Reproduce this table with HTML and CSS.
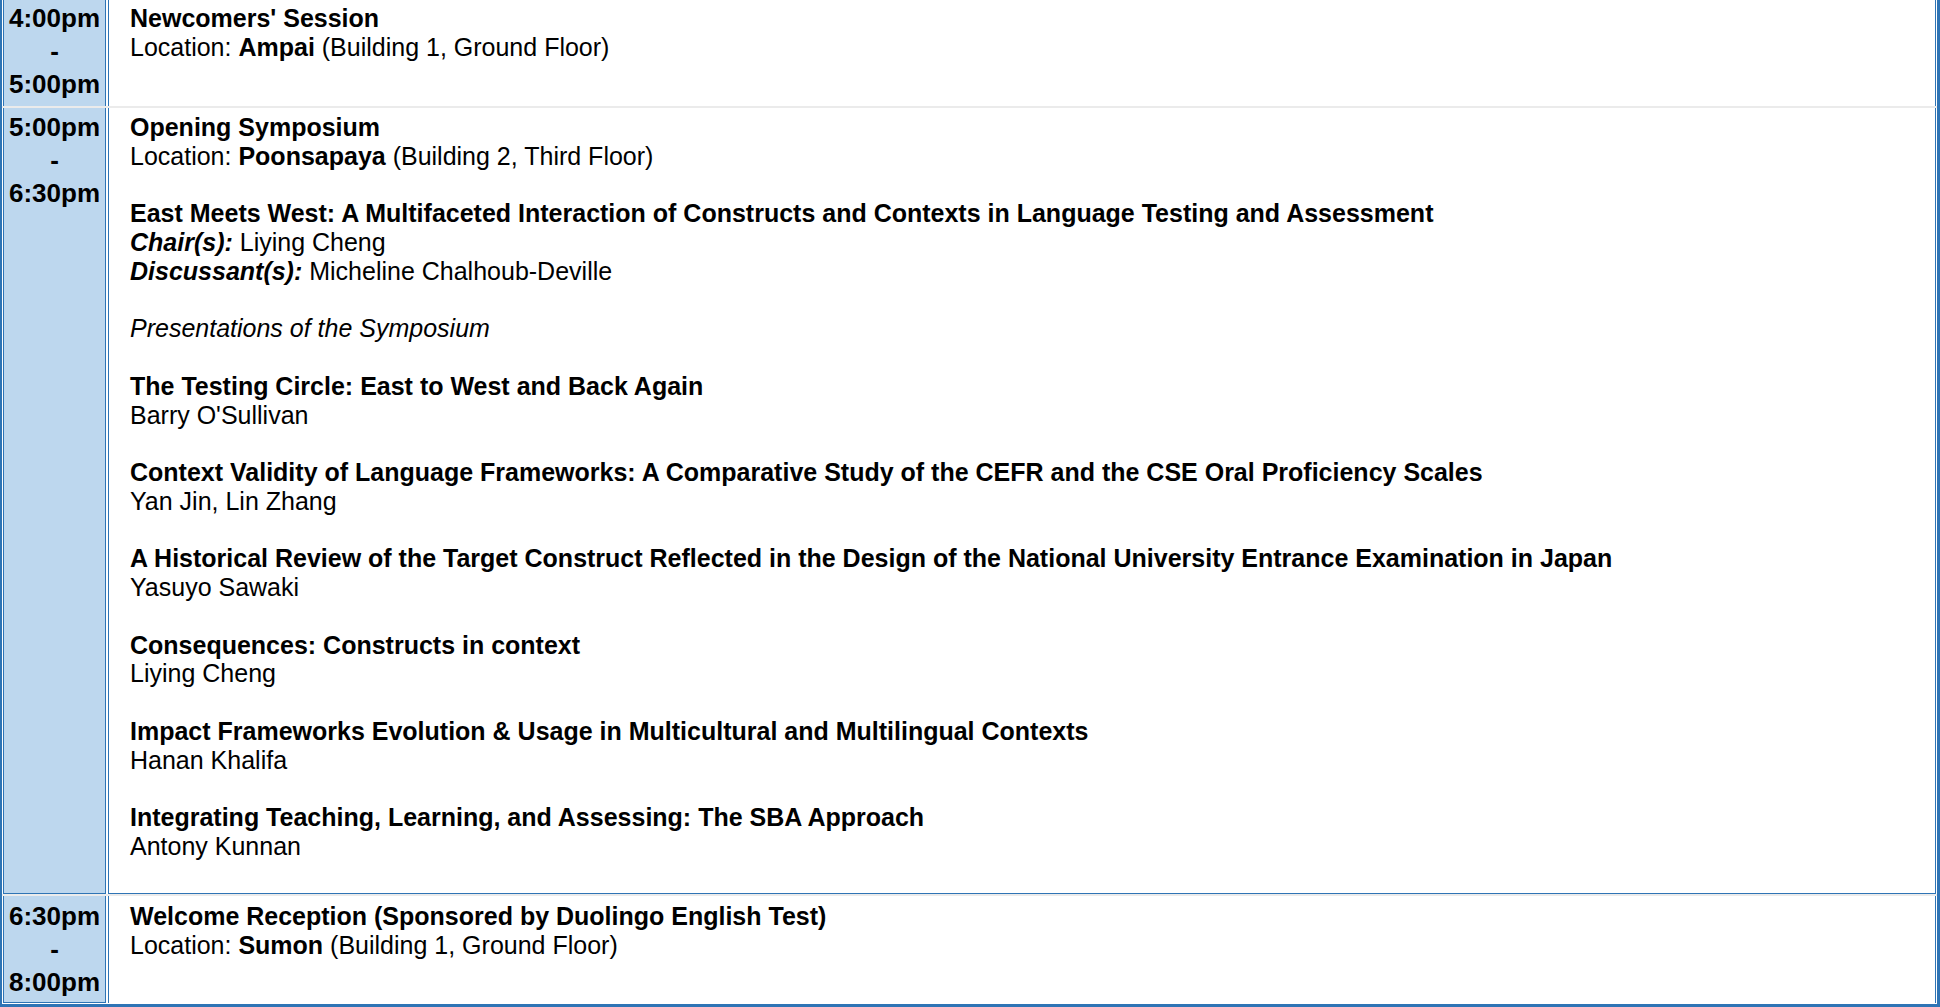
FILE: index.html
```html
<!DOCTYPE html>
<html>
<head>
<meta charset="utf-8">
<link rel="stylesheet" href="styles.css">
</head>
<body>
<div class="schedule">
  <div class="row">
    <div class="time">4:00pm<br>-<br>5:00pm</div>
    <div class="event">
      <div class="title">Newcomers' Session</div>
      <div>Location: <b>Ampai</b> (Building 1, Ground Floor)</div>
    </div>
  </div>
  <div class="row long">
    <div class="time">5:00pm<br>-<br>6:30pm</div>
    <div class="event">
      <div class="block">
        <div class="title">Opening Symposium</div>
        <div>Location: <b>Poonsapaya</b> (Building 2, Third Floor)</div>
      </div>
      <div class="block">
        <div class="title">East Meets West: A Multifaceted Interaction of Constructs and Contexts in Language Testing and Assessment</div>
        <div><b><i>Chair(s):</i></b> Liying Cheng</div>
        <div><b><i>Discussant(s):</i></b> Micheline Chalhoub-Deville</div>
      </div>
      <div class="block"><i>Presentations of the Symposium</i></div>
      <div class="block">
        <div class="title">The Testing Circle: East to West and Back Again</div>
        <div>Barry O'Sullivan</div>
      </div>
      <div class="block">
        <div class="title">Context Validity of Language Frameworks: A Comparative Study of the CEFR and the CSE Oral Proficiency Scales</div>
        <div>Yan Jin, Lin Zhang</div>
      </div>
      <div class="block">
        <div class="title">A Historical Review of the Target Construct Reflected in the Design of the National University Entrance Examination in Japan</div>
        <div>Yasuyo Sawaki</div>
      </div>
      <div class="block">
        <div class="title">Consequences: Constructs in context</div>
        <div>Liying Cheng</div>
      </div>
      <div class="block">
        <div class="title">Impact Frameworks Evolution &amp; Usage in Multicultural and Multilingual Contexts</div>
        <div>Hanan Khalifa</div>
      </div>
      <div class="block">
        <div class="title">Integrating Teaching, Learning, and Assessing: The SBA Approach</div>
        <div>Antony Kunnan</div>
      </div>
    </div>
  </div>
  <div class="row last">
    <div class="time">6:30pm<br>-<br>8:00pm</div>
    <div class="event">
      <div class="title">Welcome Reception (Sponsored by Duolingo English Test)</div>
      <div>Location: <b>Sumon</b> (Building 1, Ground Floor)</div>
    </div>
  </div>
</div>
</body>
</html>
```
FILE: styles.css
```css
html, body {
  margin: 0;
  padding: 0;
  background: #ffffff;
}

body {
  font-family: "Liberation Sans", Arial, sans-serif;
  color: #000000;
  overflow: hidden;
}

.schedule {
  margin-top: -1px;
  width: 1940px;
  box-sizing: border-box;
  border-left: 2px solid #2e74b5;
  border-right: 3px solid #2e74b5;
  border-bottom: 3px solid #2e74b5;
  padding: 0 1px 1px 1px;
  background: #ffffff;
}

.row {
  display: grid;
  grid-template-columns: 103px 1fr;
  column-gap: 2px;
}

.row + .row {
  border-top: 2px solid #ebebeb;
  margin: 0 -1px;
  padding: 0 1px;
}

.time {
  background: #bdd7ee;
  border-left: 1px solid #2e74b5;
  border-right: 1px solid #2e74b5;
  text-align: center;
  font-weight: bold;
  font-size: 26px;
  line-height: 33px;
  padding: 3px 0 5px 0;
}

.event {
  border-left: 1px solid #2e74b5;
  border-right: 1px solid #2e74b5;
  padding: 5px 21px 0 21px;
  font-size: 25px;
  line-height: 28.75px;
}

.title {
  font-weight: bold;
}

.block + .block {
  margin-top: 28.75px;
}

.long .event {
  padding-bottom: 32.5px;
}

.long .time,
.long .event {
  border-bottom: 1px solid #2e74b5;
}

.last .time {
  border-bottom: 1px solid #2e74b5;
  padding-top: 4px;
  padding-bottom: 3px;
}

.last .event {
  padding-top: 6px;
}
```
